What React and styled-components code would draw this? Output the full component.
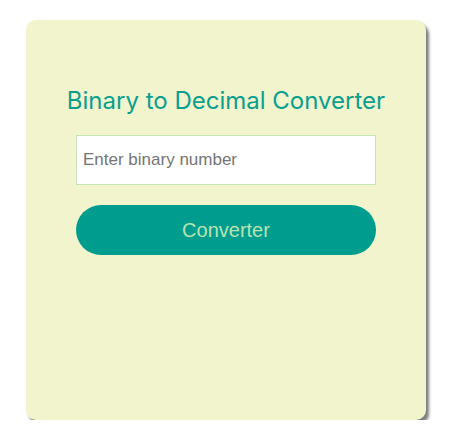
import React from "react";
import styled, { createGlobalStyle } from "styled-components";

const Global = createGlobalStyle`
  html, body { margin: 0; padding: 0; background: #ffffff; }
  body { font-family: "Liberation Sans", Arial, sans-serif; }
`;

const Page = styled.div`
  padding: 20px 0 0 26px;
`;

const Card = styled.div`
  width: 400px;
  height: 400px;
  box-sizing: border-box;
  background: #f1f4cc;
  border-radius: 10px;
  box-shadow: 3px 4px 3px #7f7f7f;
  display: flex;
  flex-direction: column;
  align-items: center;
  padding-top: 66px;
`;

const Title = styled.h1`
  margin: 0 0 19px;
  font-family: Inter, "Noto Sans", sans-serif;
  font-weight: 400;
  font-size: 24px;
  line-height: 30px;
  color: #0a9f8f;
`;

const Input = styled.input`
  width: 300px;
  height: 50px;
  box-sizing: border-box;
  border: 1px solid #c3e2b5;
  background: #ffffff;
  padding: 0 6px;
  font-family: "Liberation Sans", Arial, sans-serif;
  font-size: 17px;
  color: #333;
  outline: none;
  &::placeholder { color: #757575; }
`;

const Button = styled.button`
  margin-top: 20px;
  width: 300px;
  height: 50px;
  border: none;
  border-radius: 25px;
  background: #009d8e;
  color: #b9e3b3;
  font-family: "Liberation Sans", Arial, sans-serif;
  font-size: 20px;
  cursor: pointer;
`;

export default function App() {
  return (
    <Page>
      <Global />
      <Card>
        <Title>Binary to Decimal Converter</Title>
        <Input type="text" placeholder="Enter binary number" autoFocus />
        <Button>Converter</Button>
      </Card>
    </Page>
  );
}
